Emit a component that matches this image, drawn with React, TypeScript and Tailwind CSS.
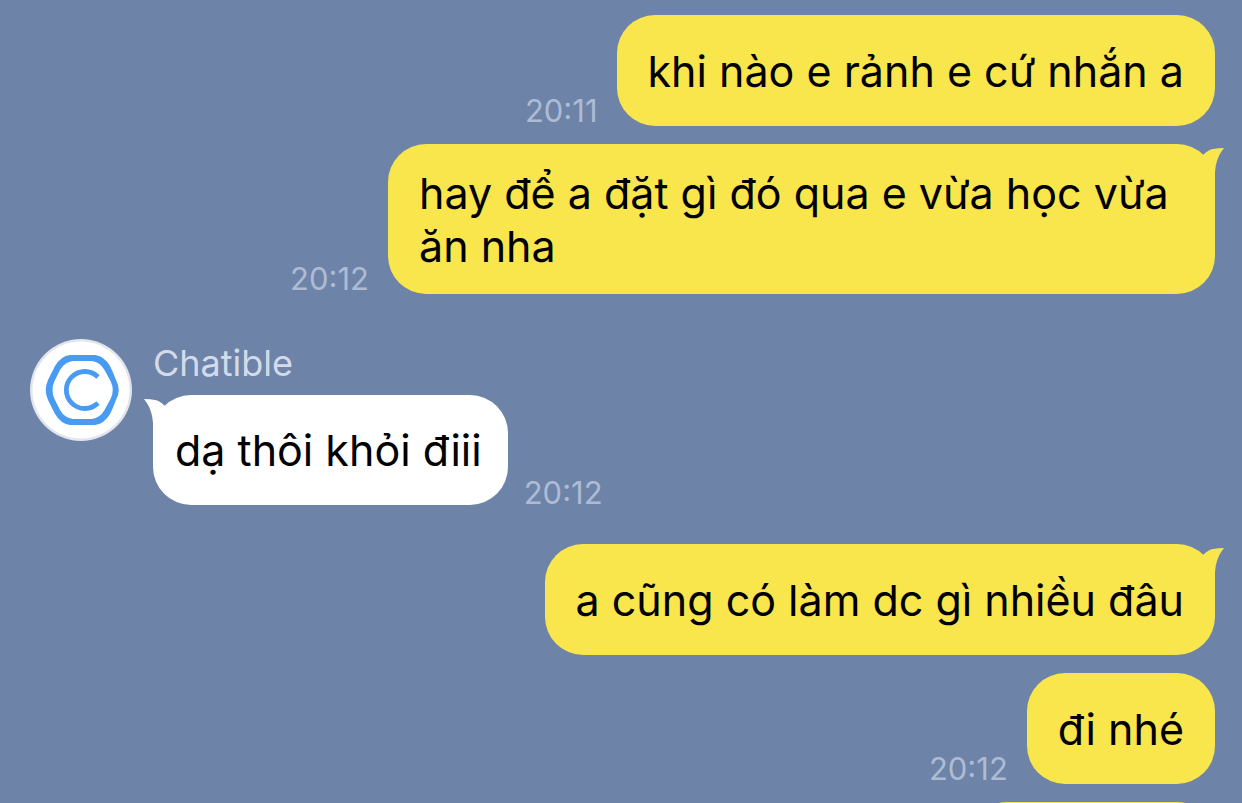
import type { ReactNode } from 'react';

function Tail({ side }: { side: 'left' | 'right' }) {
  return (
    <svg
      aria-hidden="true"
      viewBox="0 0 30 44"
      className={
        side === 'right'
          ? 'absolute top-0 -right-2.5 h-11 w-[30px] fill-[#f9e54c]'
          : 'absolute top-0 -left-2.5 h-11 w-[30px] -scale-x-100 fill-white'
      }
    >
      <path d="M8 11 C12 7 15 5.500 18 5 Q23 4 29 4 C25.500 8.500 23.500 12 22 17 Q20.300 22 20 28 V42 H5 Z" />
    </svg>
  );
}

function Time({ children, low }: { children: string; low?: boolean }) {
  return (
    <time className={low ? 'text-[31px] leading-6 text-[#adbbd5]' : 'text-[31px] leading-[31px] text-[#adbbd5]'}>
      {children}
    </time>
  );
}

function Sent({ children, time, tail }: { children: ReactNode; time?: string; tail?: boolean }) {
  return (
    <li className="flex items-end justify-end gap-[19px]">
      {time && <Time>{time}</Time>}
      <div className="relative flex min-h-[111px] max-w-[827px] items-center rounded-[38px] bg-[#f9e54c] px-[31px] pt-[23px] pb-[21px]">
        {tail && <Tail side="right" />}
        <p>{children}</p>
      </div>
    </li>
  );
}

function Avatar() {
  return (
    <svg role="img" aria-label="Chatible" viewBox="0 0 102 102" className="size-[102px] shrink-0">
      <circle cx="51" cy="51" r="51" fill="#e2e5ec" />
      <circle cx="51" cy="51" r="48.500" fill="#fff" />
      <path
        fill="#479bf3"
        fillRule="evenodd"
        d="M40 16 H65 Q74 17 80 27 Q83 33 86 41 Q91.500 51 86 61 Q83 69 80 75 Q74 85 65 86 H40 Q31 85 25 75 Q22 69 18 61 Q13.500 51 18 41 Q22 33 25 27 Q31 17 40 16 Z M43 22 H62 Q70 23 74.500 31 L80.500 42 Q85 51 80.500 60 L74.500 71 Q70 79 62 80 H43 Q34.500 79 30 71 L24.500 60 Q20.500 51 24.500 42 L30 31 Q34.500 23 43 22 Z"
      />
      <path
        fill="none"
        stroke="#479bf3"
        strokeWidth="4.800"
        d="M68 38 A18.500 18.500 0 1 0 68 64"
      />
    </svg>
  );
}

export default function App() {
  return (
    <main className="h-screen overflow-hidden bg-[#6e83a8] pt-[15px] pr-[27px] pl-[30px] font-['Inter','Noto_Sans',sans-serif] text-[43px] leading-[53px] text-black">
      <ul className="flex flex-col gap-[18px]">
        <Sent time="20:11">khi nào e rảnh e cứ nhắn a</Sent>
        <Sent time="20:12" tail>
          hay để a đặt gì đó qua e vừa học vừa ăn nha
        </Sent>
      </ul>
      <section className="mt-[45px] mb-[39px] flex items-start gap-[21px]">
        <Avatar />
        <div>
          <h2 className="mb-2 text-[36px] leading-[48px] text-[#d3dbea]">Chatible</h2>
          <div className="flex items-end gap-4">
            <div className="relative flex min-h-[110px] items-center rounded-[38px] bg-white pr-[26px] pl-[22px]">
              <Tail side="left" />
              <p>dạ thôi khỏi điii</p>
            </div>
            <Time low>20:12</Time>
          </div>
        </div>
      </section>
      <ul className="flex flex-col gap-[18px]">
        <Sent tail>a cũng có làm dc gì nhiều đâu</Sent>
        <Sent time="20:12">đi nhé</Sent>
        <li className="h-[111px] w-[246px] shrink-0 self-end rounded-[38px] bg-[#f9e54c]" />
      </ul>
    </main>
  );
}
